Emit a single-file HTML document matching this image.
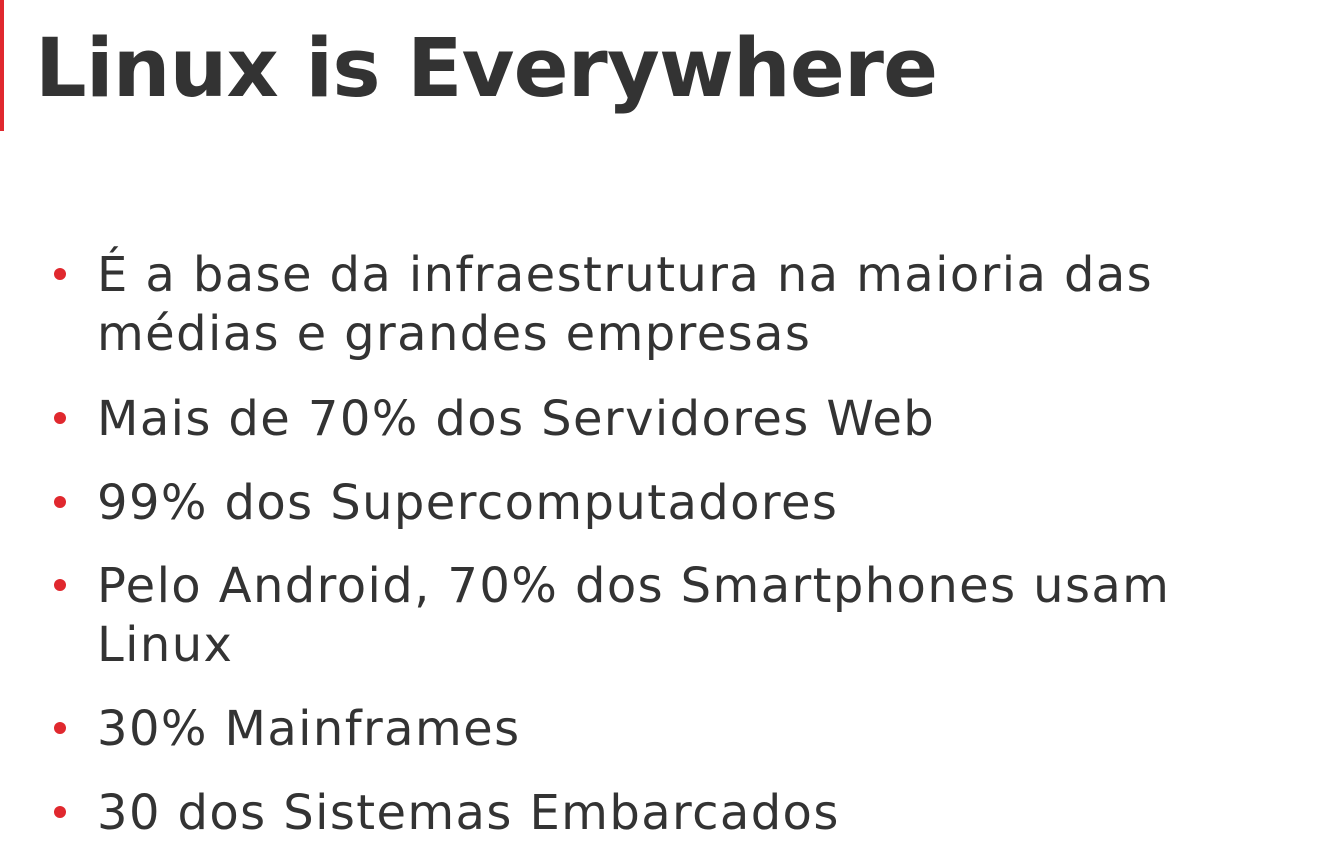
<!DOCTYPE html>
<html><head><meta charset="utf-8"><style>
html,body{margin:0;padding:0;background:#fff;width:1321px;height:853px;overflow:hidden;position:relative}
.bar{position:absolute;left:0;top:0;width:4px;height:131px;background:#e0282e}
.t{position:absolute;font-family:"DejaVu Sans","Liberation Sans",sans-serif;color:#333;white-space:nowrap;line-height:1.164}
.h{font-weight:bold;font-size:81px;left:35px;letter-spacing:-0.8px}
.b{font-size:48px;left:97px;letter-spacing:1.4px}
.d{position:absolute;left:54px;width:12px;height:12px;border-radius:50%;background:#e0282e}
</style></head><body>
<div class="bar"></div>
<div class="t h" style="top:22px">Linux is Everywhere</div>
<div class="d" style="top:268px"></div>
<div class="t b" style="top:248px">É a base da infraestrutura na maioria das</div>
<div class="t b" style="top:307px">médias e grandes empresas</div>
<div class="d" style="top:412px"></div>
<div class="t b" style="top:392px">Mais de 70% dos Servidores Web</div>
<div class="d" style="top:496px"></div>
<div class="t b" style="top:476px">99% dos Supercomputadores</div>
<div class="d" style="top:579px"></div>
<div class="t b" style="top:559px">Pelo Android, 70% dos Smartphones usam</div>
<div class="t b" style="top:618px">Linux</div>
<div class="d" style="top:722px"></div>
<div class="t b" style="top:702px">30% Mainframes</div>
<div class="d" style="top:806px"></div>
<div class="t b" style="top:786px">30 dos Sistemas Embarcados</div>
</body></html>
